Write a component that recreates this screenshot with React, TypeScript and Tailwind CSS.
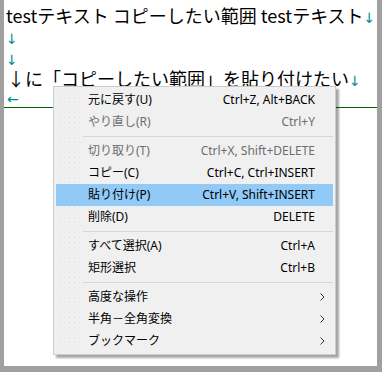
import React from "react";

type Item =
  | { sep: true }
  | { label: string; key?: string; disabled?: boolean; active?: boolean; sub?: boolean; sep?: false };

const items: Item[] = [
  { label: "元に戻す(U)", key: "Ctrl+Z, Alt+BACK" },
  { label: "やり直し(R)", key: "Ctrl+Y", disabled: true },
  { sep: true },
  { label: "切り取り(T)", key: "Ctrl+X, Shift+DELETE", disabled: true },
  { label: "コピー(C)", key: "Ctrl+C, Ctrl+INSERT" },
  { label: "貼り付け(P)", key: "Ctrl+V, Shift+INSERT", active: true },
  { label: "削除(D)", key: "DELETE" },
  { sep: true },
  { label: "すべて選択(A)", key: "Ctrl+A" },
  { label: "矩形選択", key: "Ctrl+B" },
  { sep: true },
  { label: "高度な操作", sub: true },
  { label: "半角－全角変換", sub: true },
  { label: "ブックマーク", sub: true },
];

const Eol = () => <span className="text-[#008b8b] font-['DejaVu_Sans',sans-serif] text-[14px]">↓</span>;

export default function App() {
  return (
    <div className="relative w-[382px] h-[372px] bg-[#a0a0a0] pl-[4px] pr-[5px] pb-[6px]">
      <div className="h-full bg-white pt-[6px] font-['Noto_Sans_CJK_JP',sans-serif] text-[18px] leading-[18px] text-black">
        <div className="pl-[2px] whitespace-nowrap">
          testテキスト コピーしたい範囲 testテキスト<Eol />
        </div>
        <div className="pl-[2px]"><Eol /></div>
        <div className="pl-[2px]"><Eol /></div>
        <div className="pl-[3px] whitespace-nowrap">
          ↓に「コピーしたい範囲」を貼り付けたい<Eol />
        </div>
        <div className="pl-[3px] h-[18px] border-b border-[#006400] text-[#008b8b] font-['DejaVu_Sans',sans-serif] text-[14px]">
          ←
        </div>
      </div>

      {/* context menu */}
      <div className="absolute left-[53px] top-[86px] w-[283px] border border-[#cccccc] bg-[#f0f0f0] p-[2px] shadow-[3px_3px_2px_rgba(0,0,0,0.35)] font-['Noto_Sans','Noto_Sans_CJK_JP',sans-serif] text-[12px]">
        <div className="absolute left-[3px] top-[3px] bottom-[3px] w-[24px] bg-[radial-gradient(circle,#e0e0e0_0.7px,transparent_0.9px)] bg-[length:5px_5px]" />
        {items.map((it, i) =>
          it.sep ? (
            <div key={i} className="h-[7px] flex items-center">
              <div className="ml-[27px] h-px flex-1 bg-[#d7d7d7]" />
            </div>
          ) : (
            <div
              key={i}
              className={`relative h-[22px] flex items-center pl-[32px] pr-[18px] ${it.active ? "bg-[#91c9f7]" : ""} ${it.disabled ? "text-[#6d6d6d]" : "text-black"}`}
            >
              <span className="flex-1">{it.label}</span>
              {it.key && <span>{it.key}</span>}
              {it.sub && (
                <svg className="mr-[-10px]" width="5" height="8" viewBox="0 0 5 8" fill="none" stroke="#333" strokeWidth="1">
                  <path d="M0.5 0.5L4 4L0.5 7.5" />
                </svg>
              )}
            </div>
          )
        )}
      </div>
    </div>
  );
}
